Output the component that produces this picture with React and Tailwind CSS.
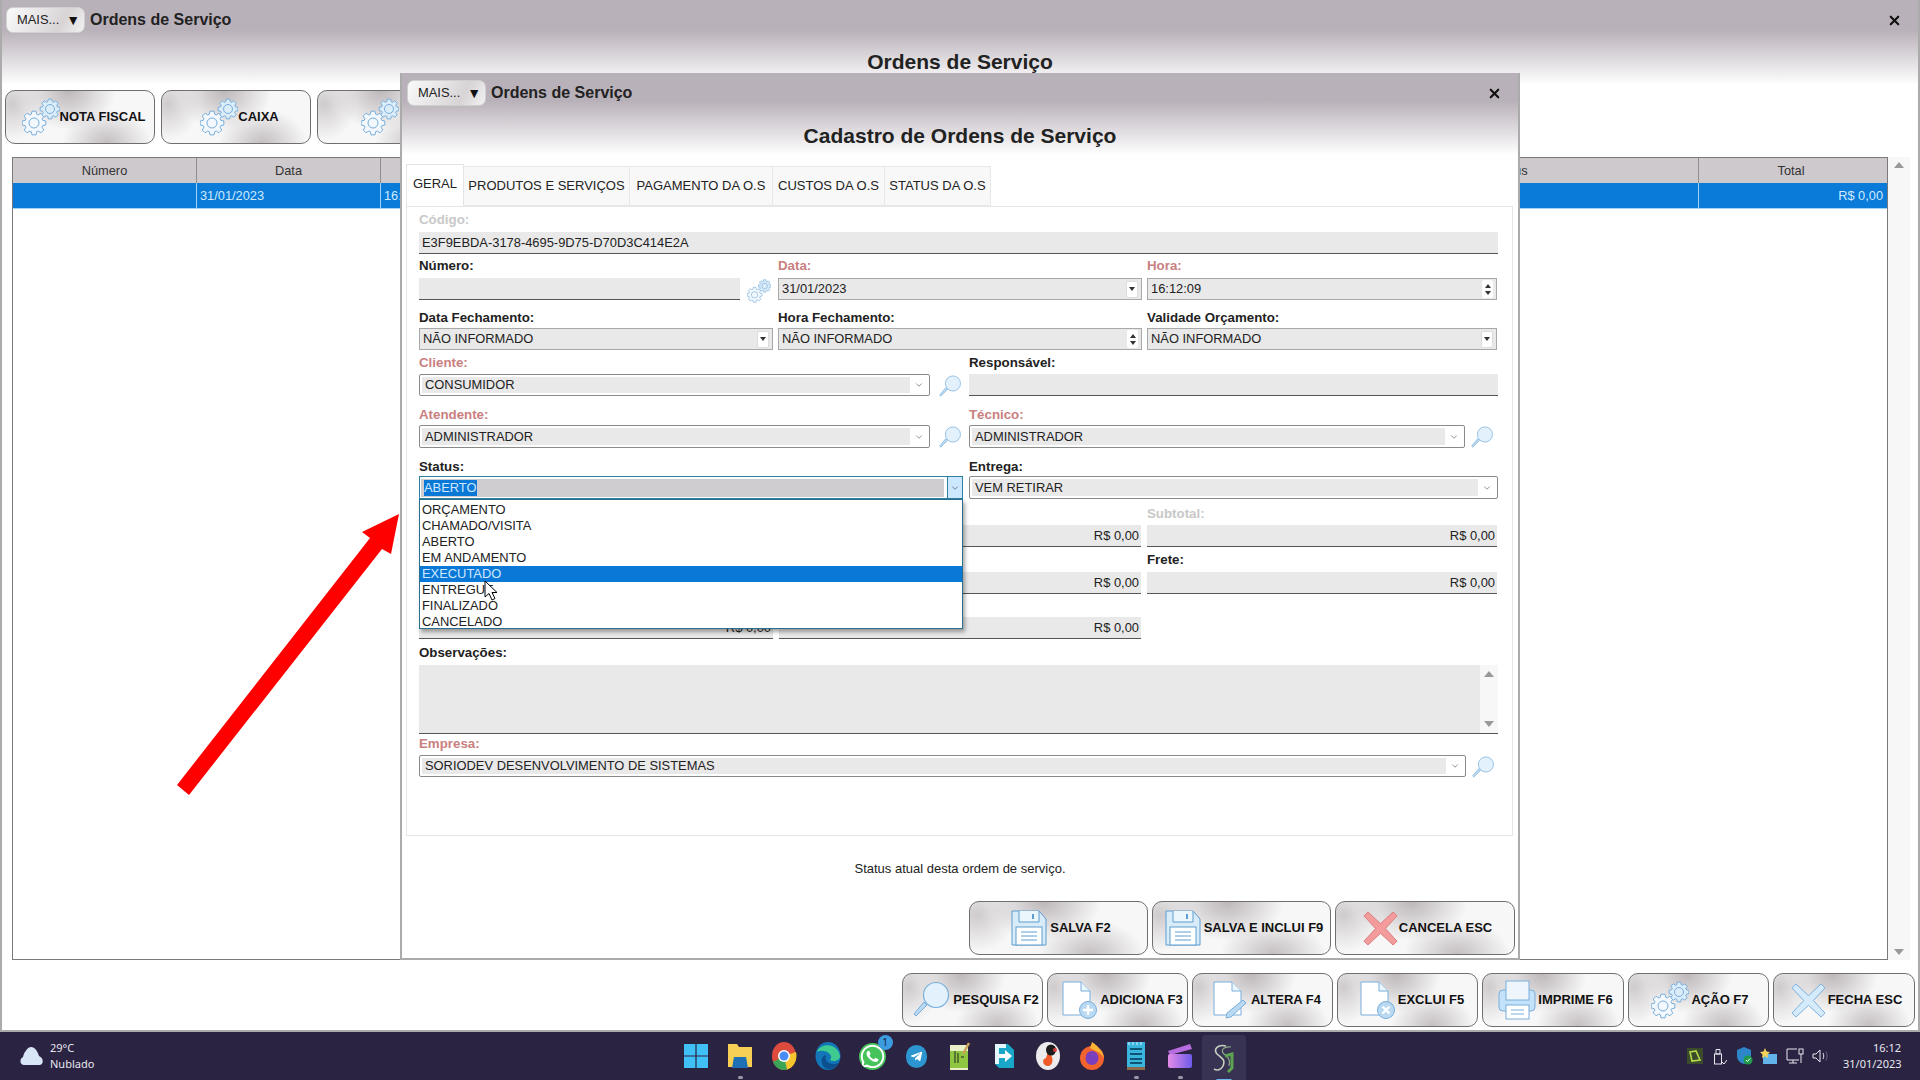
import React from "react";
import { ChevronDown, X } from "lucide-react";
import { FaWhatsapp, FaTelegramPlane } from "react-icons/fa";

const metal =
  "border border-[#6f6f6f] rounded-[10px] bg-[radial-gradient(ellipse_32%_75%_at_42%_0%,#bdb7ba,transparent),radial-gradient(ellipse_30%_65%_at_68%_100%,#c4bfc2,transparent),radial-gradient(ellipse_22%_70%_at_4%_25%,#cfcbcd,transparent),linear-gradient(#f7f7f7,#f7f7f7)] flex items-center justify-center font-bold text-[13px] text-[#111] shrink-0";
const label = "block text-[13.3px] leading-[14px] font-bold text-[#222]";
const labelReq = "block text-[13.3px] leading-[14px] font-bold text-[#c98080]";
const labelOff = "block text-[13.3px] leading-[14px] font-bold text-[#c8c8c8]";

function gearPath(cx, cy, r) {
  const teeth = 8;
  let d = "";
  for (let i = 0; i < teeth; i++) {
    const a = (i / teeth) * Math.PI * 2;
    const pts = [
      [r * 0.76, a - 0.3],
      [r, a - 0.17],
      [r, a + 0.17],
      [r * 0.76, a + 0.3],
    ];
    pts.forEach(([rad, an], j) => {
      const x = (cx + rad * Math.cos(an)).toFixed(2);
      const y = (cy + rad * Math.sin(an)).toFixed(2);
      d += (i === 0 && j === 0 ? "M" : "L") + x + " " + y;
    });
  }
  return d + "Z";
}

function Gears({ w = 38, h = 38 }) {
  return (
    <svg width={w} height={h} viewBox="0 0 38 38" className="shrink-0">
      <path d={gearPath(12, 25, 12)} fill="#f2f8fd" stroke="#78aedb" strokeWidth="1" />
      <circle cx="12" cy="25" r="5" fill="none" stroke="#78aedb" strokeWidth="1" />
      <path d={gearPath(28, 11, 10)} fill="#dcedfa" stroke="#78aedb" strokeWidth="1" />
      <circle cx="28" cy="11" r="4.5" fill="none" stroke="#78aedb" strokeWidth="1" />
    </svg>
  );
}

function Lens({ size = 38 }) {
  return (
    <svg width={size} height={size} viewBox="0 0 38 38" className="shrink-0">
      <path d="M14 24 L3 35 L1 33 L11 21Z" fill="#b9d9f2" stroke="#78aedb" strokeWidth="1" />
      <circle cx="23" cy="14" r="12.5" fill="#e2f1fb" stroke="#78aedb" strokeWidth="1.2" />
    </svg>
  );
}

function Floppy() {
  return (
    <svg width="36" height="36" viewBox="0 0 36 36" className="shrink-0">
      <path d="M1 1H28L35 9V35H1Z" fill="#d8ebf9" stroke="#5f9dcf" />
      <path d="M8 1V12H28V1" fill="#eaf5fc" stroke="#5f9dcf" />
      <path d="M22 4V9" stroke="#5f9dcf" strokeWidth="2" />
      <rect x="5" y="17" width="26" height="18" fill="#fff" stroke="#5f9dcf" />
      <path d="M10 22H26M10 26H26M10 30H26" stroke="#5f9dcf" />
    </svg>
  );
}

function BigX({ color = "#d5eafa", line = "#78aedb", size = 35 }) {
  return (
    <svg width={size} height={size} viewBox="0 0 36 36" className="shrink-0">
      <path
        d="M5 1L18 13L31 1L35 5L23 18L35 31L31 35L18 23L5 35L1 31L13 18L1 5Z"
        fill={color}
        stroke={line}
        strokeWidth="1"
      />
    </svg>
  );
}

function Doc({ badge }) {
  return (
    <svg width="36" height="38" viewBox="0 0 36 38" className="shrink-0">
      <path d="M1 1H19L28 10V34H1Z" fill="#fff" stroke="#78aedb" />
      <path d="M19 1V10H28" fill="#eaf5fc" stroke="#78aedb" />
      {badge === "plus" && (
        <>
          <circle cx="26" cy="29" r="8.5" fill="#b9d9f2" stroke="#78aedb" />
          <path d="M26 24V34M21 29H31" stroke="#fff" strokeWidth="2.4" />
        </>
      )}
      {badge === "x" && (
        <>
          <circle cx="26" cy="29" r="8.5" fill="#b9d9f2" stroke="#78aedb" />
          <path d="M22.5 25.5L29.5 32.5M29.5 25.5L22.5 32.5" stroke="#fff" strokeWidth="2.4" />
        </>
      )}
      {badge === "pen" && <path d="M30 19L33 22L18 36L13 37L14 32Z" fill="#b9d9f2" stroke="#78aedb" />}
    </svg>
  );
}

function Printer() {
  return (
    <svg width="38" height="40" viewBox="0 0 38 40" className="shrink-0">
      <rect x="1" y="10" width="36" height="21" rx="4" fill="#c4e2f9" stroke="#78aedb" />
      <rect x="8" y="1" width="23" height="19" fill="#eef6fc" stroke="#78aedb" />
      <rect x="8" y="25" width="23" height="14" fill="#fff" stroke="#78aedb" />
      <path d="M13 30H26M13 34H26" stroke="#78aedb" />
    </svg>
  );
}

function Tri({ up, big, color = "#333" }) {
  const size = big ? "border-x-[5px] " : "border-x-[3px] ";
  return up ? (
    <span
      className={"block w-0 h-0 border-x-transparent " + size + (big ? "border-b-[6px]" : "border-b-[4px]")}
      style={{ borderBottomColor: color }}
    />
  ) : (
    <span
      className={"block w-0 h-0 border-x-transparent " + size + (big ? "border-t-[6px]" : "border-t-[4px]")}
      style={{ borderTopColor: color }}
    />
  );
}

function Under({ children, className = "", right }) {
  return (
    <div
      className={
        "h-[22px] bg-[#e9e9e9] border-b border-[#555] flex items-center text-[12.9px] text-[#222] px-[2px] " +
        (right ? "justify-end " : "") +
        className
      }
    >
      {children}
    </div>
  );
}

function Framed({ value, spin }) {
  return (
    <div className="h-[22px] bg-[#e9e9e9] border border-[#a8a8a8] flex items-center justify-between text-[12.9px] text-[#222] pl-[3px] pr-[3px]">
      <span>{value}</span>
      {spin ? (
        <span className="w-[11px] h-[18px] bg-white rounded-[2px] flex flex-col items-center justify-center gap-[3px]">
          <Tri up />
          <Tri />
        </span>
      ) : (
        <span className="w-[12px] h-[17px] bg-white rounded-[2px] flex items-center justify-center border border-[#ddd]">
          <Tri />
        </span>
      )}
    </div>
  );
}

function Combo({ value, className = "h-[22px]" }) {
  return (
    <div className={"bg-white border border-[#8a8a8a] rounded-[2px] flex items-center p-[2px] text-[12.9px] text-[#222] " + className}>
      <span className="flex-1 h-full bg-[#e9e9e9] flex items-center pl-[3px]">{value}</span>
      <span className="w-[17px] flex justify-end pr-[3px] text-[#555]">
        <ChevronDown size={10} strokeWidth={1.5} />
      </span>
    </div>
  );
}

function Search() {
  return (
    <div className="flex justify-center pl-[2px] pt-[1px]">
      <Lens size={23} />
    </div>
  );
}

const statusOptions = ["ORÇAMENTO", "CHAMADO/VISITA", "ABERTO", "EM ANDAMENTO", "EXECUTADO", "ENTREGUE", "FINALIZADO", "CANCELADO"];

function StatusField() {
  return (
    <div className="relative">
      <span className={label + " h-[16px]"}>Status:</span>
      <div className="h-[23px] bg-white border border-[#2f7f9f] flex items-center text-[12.9px]">
        <div className="flex-1 h-[18px] bg-[#cfcdcf] ml-[1px] pl-[3px] flex items-center">
          <span className="bg-[#0a78d7] text-[#cfe8ff] leading-[16px]">ABERTO</span>
        </div>
        <span className="w-[15px] h-full ml-[3px] bg-[#cce8ff] border-l border-[#2f7f9f] flex items-center justify-center text-[#444]">
          <ChevronDown size={10} strokeWidth={1.5} />
        </span>
      </div>
      <div className="absolute left-0 top-[39px] w-full h-[130px] pt-[2px] z-10 bg-white border border-[#2b6f8f] shadow-[2px_3px_4px_rgba(0,0,0,0.35)] text-[12.9px] text-[#222]">
        {statusOptions.map((o) => (
          <div
            key={o}
            className={"h-[16px] leading-[16px] pl-[2px] " + (o === "EXECUTADO" ? "bg-[#0a78d7] text-[#cfe8ff]" : "")}
          >
            {o}
          </div>
        ))}
      </div>
    </div>
  );
}

function Tabs() {
  const tabs = [
    ["PRODUTOS E SERVIÇOS", "w-[166px]"],
    ["PAGAMENTO DA O.S", "w-[143px]"],
    ["CUSTOS DA O.S", "w-[112px]"],
    ["STATUS DA O.S", "w-[106px]"],
  ];
  return (
    <div className="flex items-end ml-[4px] h-[43px] text-[13px] text-[#222]">
      <div className="w-[58px] h-[42px] bg-white border border-b-0 border-[#e4e4e4] flex items-center justify-center pb-[3px]">GERAL</div>
      {tabs.map(([t, w]) => (
        <div key={t} className={"h-[40px] bg-[#f8f8f8] border border-l-0 border-[#e8e8e8] flex items-center justify-center " + w}>
          {t}
        </div>
      ))}
    </div>
  );
}

function DialogForm() {
  return (
    <div className="ml-[4px] mr-[5px] h-[630px] border border-[#e6e6e6] pl-[12px] pr-[14px] pt-[6px]">
      <span className={labelOff + " h-[19px]"}>Código:</span>
      <Under className="pl-[3px]">E3F9EBDA-3178-4695-9D75-D70D3C414E2A</Under>

      <div className="grid grid-cols-[354px_364px_350px] gap-x-[5px] mt-[5px]">
        <div>
          <span className={label + " h-[19px]"}>Número:</span>
          <div className="flex">
            <Under className="w-[321px]" />
            <div className="pl-[7px] pt-[1px]">
              <Gears w={24} h={24} />
            </div>
          </div>
        </div>
        <div>
          <span className={labelReq + " h-[19px]"}>Data:</span>
          <Framed value="31/01/2023" />
        </div>
        <div>
          <span className={labelReq + " h-[19px]"}>Hora:</span>
          <Framed value="16:12:09" spin />
        </div>
      </div>

      <div className="grid grid-cols-[354px_364px_350px] gap-x-[5px] mt-[8px]">
        <div>
          <span className={label + " h-[17px]"}>Data Fechamento:</span>
          <Framed value="NÃO INFORMADO" />
        </div>
        <div>
          <span className={label + " h-[17px]"}>Hora Fechamento:</span>
          <Framed value="NÃO INFORMADO" spin />
        </div>
        <div>
          <span className={label + " h-[17px]"}>Validade Orçamento:</span>
          <Framed value="NÃO INFORMADO" />
        </div>
      </div>

      <div className="grid grid-cols-[511px_39px_529px] mt-[6px]">
        <div>
          <span className={labelReq + " h-[18px]"}>Cliente:</span>
          <Combo value="CONSUMIDOR" />
        </div>
        <div className="pt-[18px]">
          <Search />
        </div>
        <div>
          <span className={label + " h-[18px]"}>Responsável:</span>
          <Under />
        </div>
      </div>

      <div className="grid grid-cols-[511px_39px_496px_33px] mt-[10px]">
        <div>
          <span className={labelReq + " h-[17px]"}>Atendente:</span>
          <Combo value="ADMINISTRADOR" className="h-[23px]" />
        </div>
        <div className="pt-[17px]">
          <Search />
        </div>
        <div>
          <span className={labelReq + " h-[17px]"}>Técnico:</span>
          <Combo value="ADMINISTRADOR" className="h-[23px]" />
        </div>
        <div className="pt-[17px]">
          <Search />
        </div>
      </div>

      <div className="grid grid-cols-[544px_6px_529px] mt-[11px]">
        <StatusField />
        <div />
        <div>
          <span className={label + " h-[16px]"}>Entrega:</span>
          <Combo value="VEM RETIRAR" className="h-[23px]" />
        </div>
      </div>

      <div className="grid grid-cols-[354px_362px_350px] gap-x-[6px] mt-[8px]">
        <div />
        <div className="pt-[18px]">
          <Under right>R$ 0,00</Under>
        </div>
        <div>
          <span className={labelOff + " h-[18px]"}>Subtotal:</span>
          <Under right>R$ 0,00</Under>
        </div>
      </div>

      <div className="grid grid-cols-[354px_362px_350px] gap-x-[6px] mt-[6px]">
        <div />
        <div className="pt-[19px]">
          <Under right>R$ 0,00</Under>
        </div>
        <div>
          <span className={label + " h-[19px]"}>Frete:</span>
          <Under right>R$ 0,00</Under>
        </div>
      </div>

      <div className="grid grid-cols-[354px_362px] gap-x-[6px] mt-[23px]">
        <Under right>R$ 0,00</Under>
        <Under right>R$ 0,00</Under>
      </div>

      <div className="mt-[7px]">
        <span className={label + " h-[19px]"}>Observações:</span>
        <div className="h-[69px] bg-[#e9e9e9] border-b border-[#555] flex justify-end">
          <div className="w-[18px] bg-[#f7f7f7] flex flex-col items-center justify-between py-[6px]">
            <Tri up big color="#999" />
            <Tri big color="#999" />
          </div>
        </div>
      </div>

      <div className="grid grid-cols-[1047px_33px] mt-[3px]">
        <div>
          <span className={labelReq + " h-[18px]"}>Empresa:</span>
          <Combo value="SORIODEV DESENVOLVIMENTO DE SISTEMAS" />
        </div>
        <div className="pt-[18px]">
          <Search />
        </div>
      </div>
    </div>
  );
}

function Dialog() {
  return (
    <div className="absolute left-[400px] top-[73px] w-[1120px] h-[887px] z-10 border-x-[2px] border-b-[2px] border-[#ababab] bg-[linear-gradient(#b9b1b9_0,#b9b1b9_28px,#ffffff_82px)]">
      <div className="flex items-center pt-[7px] pl-[5px] pr-[16px]">
        <MoreButton />
        <span className="ml-[5px] text-[16px] font-bold text-[#222]">Ordens de Serviço</span>
        <X size={15} strokeWidth={3.4} className="ml-auto text-[#111]" />
      </div>
      <div className="h-[60px] flex items-center justify-center text-[21px] font-bold text-[#222]">Cadastro de Ordens de Serviço</div>
      <div className="-mt-[3px]">
        <Tabs />
      </div>
      <DialogForm />
      <div className="h-[65px] flex items-center justify-center text-[13px] text-[#222]">Status atual desta ordem de serviço.</div>
      <div className="flex justify-end gap-[4px] pr-[3px]">
        <div className={metal + " w-[179px] h-[54px] pl-[5px]"}>
          <Floppy />
          <span className="ml-[3px]">SALVA F2</span>
        </div>
        <div className={metal + " w-[179px] h-[54px] pl-[5px]"}>
          <Floppy />
          <span className="ml-[3px]">SALVA E INCLUI F9</span>
        </div>
        <div className={metal + " w-[180px] h-[54px] pl-[5px]"}>
          <BigX color="#f49b9b" line="#d97a7a" />
          <span className="ml-[1px]">CANCELA ESC</span>
        </div>
      </div>
    </div>
  );
}

function MoreButton() {
  return (
    <div className="w-[79px] h-[26px] shrink-0 rounded-[7px] border border-[#d0d0d0] bg-[linear-gradient(120deg,#fafafa,#d8d4d6_70%,#f2f2f2)] flex items-center justify-between pl-[10px] pr-[4px] text-[12.9px] text-[#222]">
      <span>MAIS...</span>
      <span className="text-[14px] leading-none text-[#111]">▼</span>
    </div>
  );
}

function OrdersTable() {
  const cols = "grid grid-cols-[184px_184px_184px_756px_378px_188px]";
  return (
    <div className="flex-1 min-h-0 flex ml-[10px] mt-[13px]">
      <div className="flex-1 border border-[#7a7a7a] bg-white text-[12.8px]">
        <div className={cols + " h-[25px] bg-[#cdc9cd] text-[#333]"}>
          {["Número", "Data", "Hora", "Cliente", "Status"].map((h) => (
            <div key={h} className="flex items-center justify-center border-r border-[#8f8f8f]">
              {h}
            </div>
          ))}
          <div className="flex items-center justify-center pr-[4px]">Total</div>
        </div>
        <div className={cols + " h-[26px] bg-[#0a7bd8] text-[#cfeaff] border-b border-[#9fd3f5]"}>
          <div className="border-r border-[#9fd3f5]" />
          <div className="flex items-center pl-[3px] border-r border-[#9fd3f5]">31/01/2023</div>
          <div className="flex items-center pl-[3px]">16:</div>
          <div />
          <div className="border-r border-[#9fd3f5]" />
          <div className="flex items-center justify-end pr-[4px]">R$ 0,00</div>
        </div>
      </div>
      <div className="w-[22px] bg-[#f7f7f7] flex flex-col items-center justify-between py-[5px]">
        <Tri up big color="#999" />
        <Tri big color="#999" />
      </div>
      <div className="w-[8px]" />
    </div>
  );
}

function Taskbar() {
  const apps = [
    <svg key="win" width="24" height="24" viewBox="0 0 24 24">
      <path d="M0 0H11.4V11.4H0ZM12.6 0H24V11.4H12.6ZM0 12.6H11.4V24H0ZM12.6 12.6H24V24H12.6Z" fill="#3fc1f5" />
    </svg>,
    <svg key="folder" width="24" height="26" viewBox="0 0 24 26">
      <path d="M0 1H9L11 4H24V24H0Z" fill="#f8cf55" />
      <path d="M6 14H18L20 25H4Z" fill="#1f6fb5" />
    </svg>,
    <svg key="chrome" width="26" height="28" viewBox="0 0 26 28">
      <ellipse cx="13" cy="14" rx="12" ry="14" fill="#dd4b3e" />
      <path d="M13 14L2 20A12 14 0 0 0 17 27Z" fill="#3aa655" />
      <path d="M13 14L25 10A12 14 0 0 1 16 27.5Z" fill="#f7c52d" />
      <circle cx="13" cy="14" r="6" fill="#fff" />
      <circle cx="13" cy="14" r="4.5" fill="#4a8bf5" />
    </svg>,
    <svg key="edge" width="26" height="28" viewBox="0 0 26 28">
      <ellipse cx="13" cy="14" rx="12.5" ry="14" fill="#1276b8" />
      <path d="M2 10C5 1 22 0 25 14C25 19 18 20 15 18C20 12 8 6 2 10Z" fill="#3ecb8f" />
      <path d="M12 27C5 24 5 14 11 13C9 19 14 24 24 21C21 25 17 28 12 27Z" fill="#0c4f8f" />
    </svg>,
    <div key="wa" className="relative">
      <FaWhatsapp size={27} className="text-white bg-[#46c35a] rounded-full" />
      <span className="absolute -top-[8px] -right-[7px] w-[15px] h-[15px] rounded-full bg-[#3d9be0] text-[#10243d] text-[10px] flex items-center justify-center">1</span>
    </div>,
    <div key="tg" className="w-[21px] h-[23px] rounded-full bg-[#2d95cf] flex items-center justify-center">
      <FaTelegramPlane size={13} className="text-white" />
    </div>,
    <svg key="npp" width="20" height="28" viewBox="0 0 20 28">
      <rect y="3" width="18" height="25" fill="#e9f0c8" />
      <rect y="9" width="18" height="17" fill="#8ec641" />
      <path d="M5 9V21M8 11V21M11 15H14" stroke="#222" />
      <path d="M13 12L19 1" stroke="#c9a45a" strokeWidth="2.5" />
    </svg>,
    <svg key="doc" width="20" height="24" viewBox="0 0 20 24">
      <path d="M1 0H14L20 6V24H5L1 20Z" fill="#19a7c9" />
      <path d="M1 0H12V4H5V20L1 20Z" fill="#e3f6fb" />
      <path d="M5 10H11V6L18 12L11 18V14H5Z" fill="#fff" />
    </svg>,
    <svg key="flame" width="24" height="28" viewBox="0 0 24 28">
      <ellipse cx="12" cy="14" rx="12" ry="14" fill="#ececec" />
      <path d="M12 10C19 15 17 24 12 24C7 24 5 17 10 16Z" fill="#ef5a28" />
      <ellipse cx="15" cy="8" rx="5" ry="5.5" fill="#1c1c1c" />
      <circle cx="19" cy="8" r="2" fill="#d83b3b" />
    </svg>,
    <svg key="ff" width="24" height="28" viewBox="0 0 24 28">
      <ellipse cx="12" cy="16" rx="12" ry="12" fill="#f2632d" />
      <path d="M12 0C18 4 23 9 24 16C20 9 14 9 10 6Z" fill="#fbb437" />
      <ellipse cx="12" cy="16" rx="6.5" ry="7" fill="#7a3fbf" />
    </svg>,
    <svg key="note" width="18" height="28" viewBox="0 0 18 28">
      <rect width="18" height="26" fill="#39b6dd" />
      <rect y="25" width="18" height="3" fill="#8c6b4a" />
      <path d="M3 7H15M3 12H15M3 17H15M3 21H15" stroke="#0e5575" strokeWidth="2" />
      <path d="M2 0V3M6 0V3M10 0V3M14 0V3" stroke="#dff3fb" />
    </svg>,
    <svg key="clap" width="24" height="24" viewBox="0 0 24 24">
      <path d="M0 7L22 0L24 5L2 11Z" fill="#b76ce0" />
      <rect y="10" width="24" height="14" rx="2" fill="url(#cl)" />
      <defs>
        <linearGradient id="cl" x1="0" x2="1">
          <stop offset="0" stopColor="#e58be8" />
          <stop offset="1" stopColor="#6d5be8" />
        </linearGradient>
      </defs>
    </svg>,
    <svg key="logo" width="26" height="30" viewBox="0 0 26 30" fill="none">
      <path d="M15 2C7 0 2 5 6 10C10 14 15 15 12 22C10 26 6 27 3 25" stroke="#c6cfc0" strokeWidth="1.6" />
      <path d="M20 3C13 2 9 6 13 10C17 13 20 16 18 22" stroke="#8fa98a" strokeWidth="1.2" />
      <path d="M14 12L21 10L21 24L17 28" stroke="#5da452" strokeWidth="3" />
    </svg>,
  ];
  return (
    <div className="h-[48px] shrink-0 bg-[#2b2342] grid grid-cols-[1fr_572px_1fr] text-[#e8e8f0] text-[11px] font-['Noto_Sans',sans-serif]">
      <div className="flex items-center pl-[19px]">
        <svg width="25" height="20" viewBox="0 0 25 20">
          <path d="M5 19C1 19 0 13 4 11C5 6 9 1 12 1C16 1 19 6 20 10C25 12 25 19 20 19Z" fill="#d8e6f7" />
        </svg>
        <div className="ml-[6px] leading-[16px]">
          <div>29°C</div>
          <div>Nublado</div>
        </div>
      </div>
      <div className="flex">
        {apps.map((icon, i) => (
          <div
            key={i}
            className={
              "w-[44px] h-full relative flex items-center justify-center " +
              (i === 12 ? "bg-[#383352] rounded-[4px] my-[3px] h-[42px]" : "")
            }
          >
            {icon}
            {(i === 1 || i === 10 || i === 11) && (
              <span className="absolute bottom-[1px] w-[5px] h-[3px] rounded-full bg-[#9a98a8]" />
            )}
            {i === 12 && <span className="absolute bottom-[1px] w-[16px] h-[3px] rounded-full bg-[#6db8ef]" />}
          </div>
        ))}
      </div>
      <div className="flex items-center justify-end pr-[19px]">
        <svg width="16" height="16" viewBox="0 0 16 16" className="mr-[10px]">
          <rect width="16" height="16" fill="#3a4a2a" />
          <path d="M3 4L9 3L13 12L5 13Z" fill="none" stroke="#b6d94c" strokeWidth="1.6" />
        </svg>
        <svg width="14" height="17" viewBox="0 0 14 17" fill="none" stroke="#e8e8f0" className="mr-[9px]">
          <rect x="1.5" y="6" width="7" height="10" />
          <path d="M3 1.5H7V6H3ZM9 14L11 16L14 12" />
        </svg>
        <svg width="17" height="18" viewBox="0 0 17 18" className="mr-[7px]">
          <path d="M8 0L15 3V9C15 13 12 16 8 17C4 16 1 13 1 9V3Z" fill="#2d86c9" />
          <circle cx="12" cy="13" r="4.5" fill="#1e9a4a" />
          <path d="M10 13L11.5 14.5L14 11.5" stroke="#fff" fill="none" />
        </svg>
        <svg width="17" height="16" viewBox="0 0 17 16" className="mr-[9px]">
          <rect x="3" y="6" width="14" height="10" fill="#62b4e8" />
          <path d="M5 0L6.5 3.5L10 4L7.5 6.5L8 10L5 8.3L2 10L2.5 6.5L0 4L3.5 3.5Z" fill="#f5d35a" />
        </svg>
        <svg width="18" height="16" viewBox="0 0 18 16" fill="none" stroke="#e8e8f0" className="mr-[8px]">
          <path d="M11 1H1V12H13M7 12V15M3 15H11" />
          <rect x="13" y="1" width="4" height="5" />
          <path d="M15 6V15" />
        </svg>
        <svg width="17" height="14" viewBox="0 0 17 14" fill="none" stroke="#e8e8f0" className="mr-[14px]">
          <path d="M1 5H4L8 1V13L4 9H1Z" />
          <path d="M11 4C12 6 12 8 11 10" />
          <path d="M14 2.5C15.5 5.5 15.5 8.5 14 11.5" stroke="#6c6a7c" />
        </svg>
        <div className="text-right leading-[16px] w-[58px] whitespace-nowrap">
          <div>16:12</div>
          <div>31/01/2023</div>
        </div>
      </div>
    </div>
  );
}

export default function App() {
  const bottomButtons = [
    ["PESQUISA F2", <Lens key="a" />, "w-[141px] pl-[7px]"],
    ["ADICIONA F3", <Doc key="b" badge="plus" />, "w-[141px] pl-[10px]"],
    ["ALTERA F4", <Doc key="c" badge="pen" />, "w-[141px] pl-[9px]"],
    ["EXCLUI F5", <Doc key="d" badge="x" />, "w-[141px] pl-[9px]"],
    ["IMPRIME F6", <Printer key="e" />, "w-[142px] pl-[5px]"],
    ["AÇÃO F7", <Gears key="f" />, "w-[141px] pl-[3px]"],
    ["FECHA ESC", <BigX key="g" />, "w-[142px] pl-[5px]"],
  ];
  return (
    <div className="relative w-[1920px] h-[1080px] overflow-hidden flex flex-col bg-white font-['Liberation_Sans',Arial,sans-serif]">
      <div className="flex-1 min-h-0 flex flex-col border-x-2 border-b-2 border-[#ababab] bg-[linear-gradient(#b9b1b9_0,#b9b1b9_30px,#ffffff_85px)]">
        <div className="flex items-center pt-[7px] pl-[4px] pr-[16px]">
          <MoreButton />
          <span className="ml-[5px] text-[16px] font-bold text-[#222]">Ordens de Serviço</span>
          <X size={15} strokeWidth={3.4} className="ml-auto text-[#111]" />
        </div>
        <div className="h-[57px] flex items-center justify-center text-[21px] font-bold text-[#222]">Ordens de Serviço</div>
        <div className="flex gap-[6px] ml-[3px]">
          <div className={metal + " w-[150px] h-[54px] pl-[7px]"}>
            <Gears />
            <span>NOTA FISCAL</span>
          </div>
          <div className={metal + " w-[150px] h-[54px] pl-[7px]"}>
            <Gears />
            <span>CAIXA</span>
          </div>
          <div className={metal + " w-[150px] h-[54px] !justify-start pl-[43px]"}>
            <Gears />
          </div>
        </div>
        <OrdersTable />
        <div className="flex justify-end gap-[4px] pr-[3px] mt-[13px] mb-[3px]">
          {bottomButtons.map(([text, icon, w]) => (
            <div key={text} className={metal + " h-[54px] " + w}>
              {icon}
              <span className="ml-[2px]">{text}</span>
            </div>
          ))}
        </div>
      </div>
      <Taskbar />
      <Dialog />
      <svg width="235" height="290" viewBox="0 0 235 290" className="absolute left-[170px] top-[510px] z-20">
        <polygon points="7,275 19,285 212,39 221,44 229,4 192,22 200,28" fill="#ff0000" />
      </svg>
      <svg width="14" height="21" viewBox="0 0 14 21" className="absolute left-[484px] top-[580px] z-30">
        <path d="M1 1V17L5 13.5L8 20L11 18.5L8 12.5H13Z" fill="#fff" stroke="#000" strokeWidth="1" />
      </svg>
    </div>
  );
}
